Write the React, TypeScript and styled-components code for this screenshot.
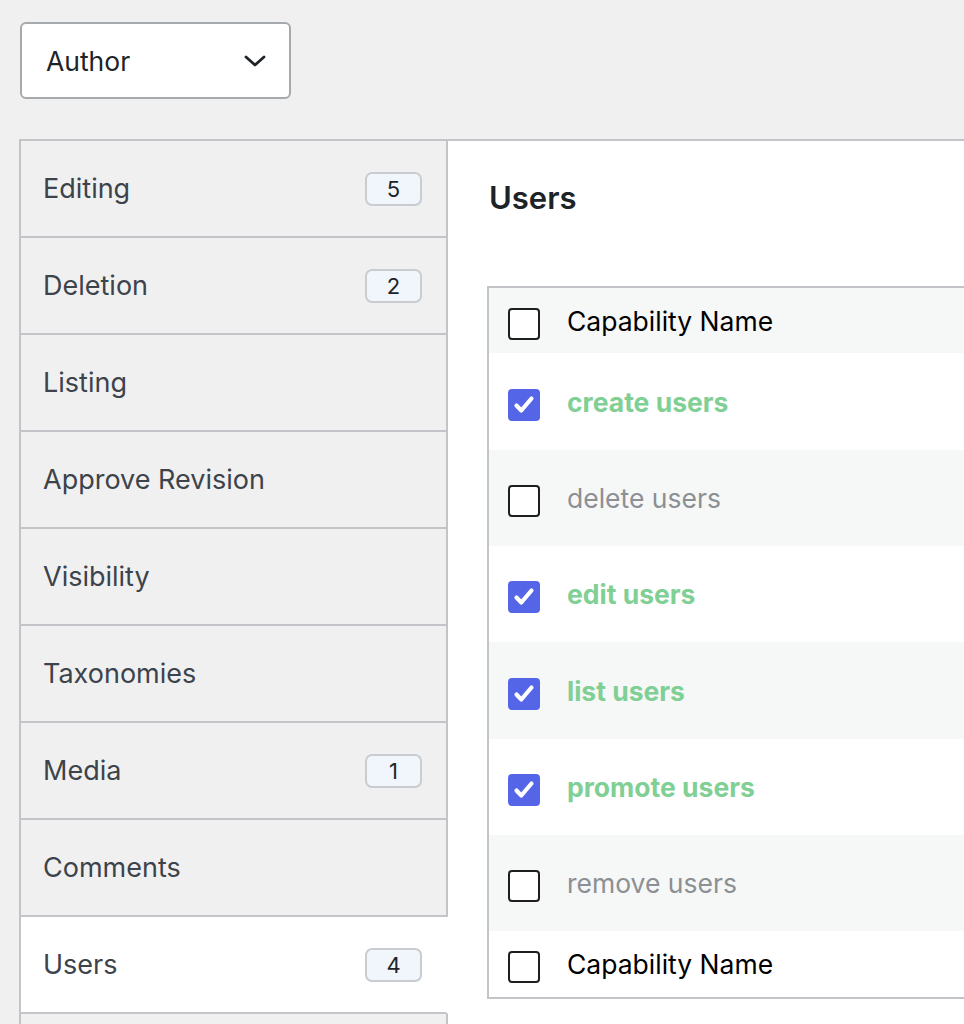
import React from "react";
import styled, { createGlobalStyle } from "styled-components";

const Global = createGlobalStyle`
  html, body { margin: 0; padding: 0; background: #f0f0f1; }
  body { font-family: Inter, "Open Sans", "Liberation Sans", sans-serif; overflow: hidden; }
  * { box-sizing: border-box; }
`;

const Page = styled.div`
  padding: 22px 0 0 19px;
  width: 964px;
  height: 1024px;
  overflow: hidden;
`;

const Select = styled.div`
  margin-left: 1px;
  width: 271px;
  height: 77px;
  background: #fff;
  border: 2px solid #a7aaad;
  border-radius: 6px;
  display: flex;
  align-items: center;
  justify-content: space-between;
  padding: 0 22px 0 24px;
  font-size: 26.5px;
  color: #1d2327;
`;

const Main = styled.div`
  margin-top: 40px;
  display: flex;
  border-top: 2px solid #c3c4c7;
  border-left: 2px solid #c3c4c7;
  width: 1000px;
`;

const Sidebar = styled.div`
  width: 427px;
  flex: none;
  display: flex;
  flex-direction: column;
`;

const Tab = styled.div<{ $active?: boolean }>`
  height: 97px;
  display: flex;
  align-items: center;
  justify-content: space-between;
  padding: 0 24px 0 22px;
  background: ${(p) => (p.$active ? "#fff" : "#f0f0f1")};
  border-bottom: 2px solid #c3c4c7;
  border-right: 2px solid ${(p) => (p.$active ? "#fff" : "#c3c4c7")};
  font-size: 27px;
  color: #3c434a;
`;

const Badge = styled.span`
  width: 57px;
  height: 34px;
  border: 2px solid #c9ccd1;
  border-radius: 7px;
  background: #f0f6fc;
  display: flex;
  align-items: center;
  justify-content: center;
  font-size: 22px;
  color: #1d2327;
`;

const Content = styled.div`
  flex: 1;
  background: #fff;
  padding: 37px 0 0 39px;
  min-height: 900px;
`;

const Heading = styled.h2`
  margin: 0 0 68px 2px;
  font-size: 31px;
  line-height: 40px;
  font-weight: 600;
  color: #1d2327;
`;

const Table = styled.div`
  border: 2px solid #c3c4c7;
  border-right: none;
`;

const Row = styled.div<{ $gray?: boolean; $h: number }>`
  height: ${(p) => p.$h}px;
  display: flex;
  align-items: center;
  padding-left: 19px;
  gap: 27px;
  background: ${(p) => (p.$gray ? "#f6f7f7" : "#fff")};
`;

const Box = styled.span<{ $checked?: boolean }>`
  width: 32px;
  height: 32px;
  flex: none;
  border-radius: 4px;
  margin-top: 6px;
  border: 2px solid ${(p) => (p.$checked ? "#5465e8" : "#1e1e1e")};
  background: ${(p) => (p.$checked ? "#5465e8" : "#fff")};
  display: flex;
  align-items: center;
  justify-content: center;
`;

const Label = styled.span<{ $kind: "head" | "on" | "off" }>`
  font-size: 26.5px;
  font-weight: ${(p) => (p.$kind === "on" ? 700 : 400)};
  color: ${(p) =>
    p.$kind === "head" ? "#000" : p.$kind === "on" ? "#80cf94" : "#8c8f94"};
`;

const Check = () => (
  <svg width="24" height="24" viewBox="0 0 24 24" fill="none">
    <path d="M4.5 12.5l4.8 5L19.5 5.5" stroke="#fff" strokeWidth="4.2" strokeLinecap="round" strokeLinejoin="round" />
  </svg>
);

const Chevron = () => (
  <svg width="24" height="24" viewBox="0 0 24 24" fill="none">
    <path d="M3 8l9 8 9-8" stroke="#1d2327" strokeWidth="2.8" strokeLinecap="round" strokeLinejoin="round" />
  </svg>
);

const tabs: { name: string; count?: number; active?: boolean }[] = [
  { name: "Editing", count: 5 },
  { name: "Deletion", count: 2 },
  { name: "Listing" },
  { name: "Approve Revision" },
  { name: "Visibility" },
  { name: "Taxonomies" },
  { name: "Media", count: 1 },
  { name: "Comments" },
  { name: "Users", count: 4, active: true },
  { name: "" },
];

const caps = [
  { name: "create users", on: true },
  { name: "delete users", on: false },
  { name: "edit users", on: true },
  { name: "list users", on: true },
  { name: "promote users", on: true },
  { name: "remove users", on: false },
];

export default function App() {
  return (
    <>
      <Global />
      <Page>
        <Select>
          <span>Author</span>
          <Chevron />
        </Select>
        <Main>
          <Sidebar>
            {tabs.map((t, i) => (
              <Tab key={i} $active={t.active}>
                <span>{t.name}</span>
                {t.count !== undefined && <Badge>{t.count}</Badge>}
              </Tab>
            ))}
          </Sidebar>
          <Content>
            <Heading>Users</Heading>
            <Table>
              <Row $gray $h={65}>
                <Box />
                <Label $kind="head">Capability Name</Label>
              </Row>
              {caps.map((c, i) => (
                <Row key={c.name} $gray={i % 2 === 1} $h={i === 0 || i === 3 ? 97 : 96}>
                  <Box $checked={c.on}>{c.on && <Check />}</Box>
                  <Label $kind={c.on ? "on" : "off"}>{c.name}</Label>
                </Row>
              ))}
              <Row $h={66}>
                <Box />
                <Label $kind="head">Capability Name</Label>
              </Row>
            </Table>
          </Content>
        </Main>
      </Page>
    </>
  );
}
